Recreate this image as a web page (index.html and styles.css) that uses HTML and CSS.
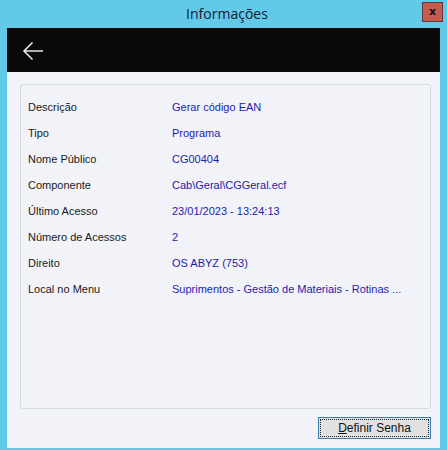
FILE: index.html
```html
<!DOCTYPE html>
<html>
<head>
    <title>Informações</title>
    <link rel="stylesheet" href="styles.css">
</head>
<body>
    <div class="titlebar">
        <span></span>
        <div class="title">Informações</div>
        <div class="close-wrap"><button class="close">x</button></div>
    </div>

    <div class="window">
        <div class="header">
            <svg class="back" width="22" height="20" viewBox="0 0 22 20">
                <path d="M21 10 H2 M10.5 1.5 L2 10 L10.5 18.5" fill="none" stroke="#e6e6e6" stroke-width="1.6"/>
            </svg>
        </div>

        <div class="content">
            <div class="panel">
                <div class="row"><span class="label">Descrição</span><span class="value">Gerar código EAN</span></div>
                <div class="row"><span class="label">Tipo</span><span class="value">Programa</span></div>
                <div class="row"><span class="label">Nome Público</span><span class="value">CG00404</span></div>
                <div class="row"><span class="label">Componente</span><span class="value">Cab\Geral\CGGeral.ecf</span></div>
                <div class="row"><span class="label">Último Acesso</span><span class="value">23/01/2023 - 13:24:13</span></div>
                <div class="row"><span class="label">Número de Acessos</span><span class="value">2</span></div>
                <div class="row"><span class="label">Direito</span><span class="value">OS ABYZ (753)</span></div>
                <div class="row"><span class="label">Local no Menu</span><span class="value">Suprimentos - Gestão de Materiais - Rotinas ...</span></div>
            </div>

            <div class="actions">
                <button class="btn"><span class="focus"><u>D</u>efinir Senha</span></button>
            </div>
        </div>
    </div>
</body>
</html>
```

FILE: styles.css
```css
body {
    margin: 0;
    width: 447px;
    height: 450px;
    background-color: #63c9e9;
    font-family: "Liberation Sans", Arial, sans-serif;
    overflow: hidden;
}

.titlebar {
    display: grid;
    grid-template-columns: 1fr auto 1fr;
    align-items: center;
    height: 28px;
    padding-left: 7px;
}

.title {
    font-family: "Open Sans", sans-serif;
    font-size: 14px;
    color: #0f2236;
    margin-top: -1px;
}

.close-wrap {
    display: flex;
    justify-content: flex-end;
    padding-right: 4px;
    align-self: start;
    padding-top: 2px;
}

.close {
    width: 21px;
    height: 20px;
    padding: 0;
    background-color: #c65a50;
    border: 1px solid #5e3b3b;
    color: #111;
    font-family: "DejaVu Sans", sans-serif;
    font-size: 11px;
    font-weight: bold;
    line-height: 16px;
}

.window {
    margin: 0 7px;
    height: 420px;
    background-color: #f2f3f8;
}

.header {
    height: 44px;
    background-color: #0a0a0a;
    display: flex;
    align-items: center;
    padding-left: 15px;
}

.back {
    margin-top: 2px;
}

.content {
    padding: 12px 9px 0 13px;
}

.panel {
    height: 314px;
    border: 1px solid #d3d9e2;
    border-radius: 3px;
    padding-top: 9px;
    box-sizing: content-box;
}

.row {
    display: flex;
    height: 26px;
    align-items: center;
    font-size: 11px;
    padding-left: 7px;
}

.label {
    width: 144px;
    color: #1a1a1a;
}

.value {
    color: #1c1cb0;
}

.actions {
    display: flex;
    justify-content: flex-end;
    margin-top: 8px;
}

.btn {
    width: 113px;
    height: 22px;
    padding: 1px;
    border: 1px solid #3a7fb4;
    background-color: #e1e1e1;
    font-family: "Liberation Sans", Arial, sans-serif;
    font-size: 12px;
    color: #111;
}

.focus {
    display: flex;
    justify-content: center;
    align-items: center;
    height: 100%;
    border: 1px dotted #222;
    box-sizing: border-box;
}
```
